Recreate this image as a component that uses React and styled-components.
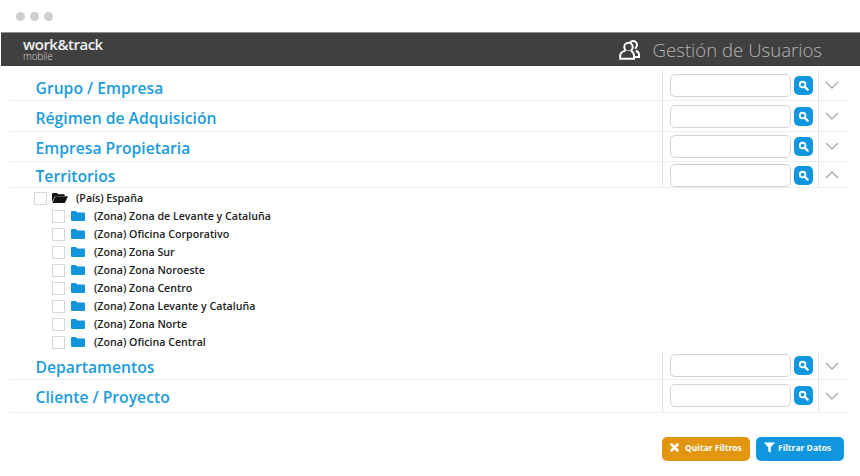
import React from 'react';
import styled, {createGlobalStyle} from 'styled-components';

const zones = [
  '(Zona) Zona de Levante y Cataluña',
  '(Zona) Oficina Corporativo',
  '(Zona) Zona Sur',
  '(Zona) Zona Noroeste',
  '(Zona) Zona Centro',
  '(Zona) Zona Levante y Cataluña',
  '(Zona) Zona Norte',
  '(Zona) Oficina Central',
];

const GlobalStyle = createGlobalStyle`
  html, body {
    margin: 0;
    padding: 0;
    background: #fff;
    font-family: "Open Sans", "Liberation Sans", sans-serif;
  }
  * { box-sizing: border-box; }
`;

const Page = styled.div`
  width: 860px;
  height: 476px;
  overflow: hidden;
  display: flex;
  flex-direction: column;
  background: #fff;
`;

const WindowBar = styled.div`
  height: 32px;
  display: flex;
  align-items: center;
  gap: 5px;
  padding: 0 0 0 16px;
`;

const Dot = styled.span`
  width: 9px;
  height: 9px;
  border-radius: 50%;
  background: #cfcfcf;
`;

const Header = styled.header`
  height: 34px;
  margin-left: 1px;
  background: #414040;
  border-top: 1px solid #8e8e8e;
  display: flex;
  align-items: center;
  justify-content: space-between;
  padding: 0 38px 0 22px;
  color: #fff;
`;

const Logo = styled.div`
  display: flex;
  flex-direction: column;
  color: #f2f2f2;
  padding-bottom: 1px;
`;

const LogoName = styled.span`
  font-size: 15px;
  line-height: 14px;
  letter-spacing: -0.5px;
  font-weight: 600;
`;

const LogoSub = styled.span`
  font-size: 10px;
  line-height: 10px;
  font-weight: 300;
  color: #d0d0d0;
  letter-spacing: -0.2px;
`;

const HeaderTitle = styled.div`
  display: flex;
  align-items: center;
  gap: 13px;
  font-size: 18.6px;
  font-weight: 300;
  color: #b5b5b5;
`;

const Content = styled.main`
  padding: 4px 12px 0 10px;
`;

const Row = styled.section`
  height: ${(p) => p.$height}px;
  display: flex;
  align-items: center;
  border-bottom: 1px solid #e6f2f8;
`;

const RowTitle = styled.h2`
  flex: 1;
  margin: ${(p) => p.$drop}px 0 0 25.5px;
  font-size: 15.7px;
  font-weight: 600;
  color: #1b9cdc;
`;

const Controls = styled.div`
  height: 100%;
  width: 186px;
  display: flex;
  align-items: center;
  border-left: 1px solid #e4e4e4;
  padding-left: 7px;
`;

const SearchGroup = styled.div`
  display: flex;
  align-items: center;
  margin-top: ${(p) => (p.$shift > 0 ? p.$shift * 2 : 0)}px;
  margin-bottom: ${(p) => (p.$shift < 0 ? p.$shift * -2 : 0)}px;
`;

const SearchInput = styled.input`
  width: 121px;
  height: 23px;
  border: 1px solid #d2d2d2;
  border-radius: 5px;
  background: #fff;
  outline: none;
`;

const SearchButton = styled.button`
  width: 19px;
  height: 19px;
  margin-left: 3px;
  padding: 0;
  border: 0;
  border-radius: 5px;
  background: #0f96de;
  display: flex;
  align-items: center;
  justify-content: center;
`;

const ChevronCell = styled.div`
  height: 100%;
  margin-left: 5px;
  padding-left: 6px;
  border-left: 1px solid #e4e4e4;
  display: flex;
  align-items: center;
`;

const Tree = styled.ul`
  list-style: none;
  margin: 0;
  padding: 1px 0 2px 24px;
`;

const TreeRow = styled.li`
  height: 18px;
  display: flex;
  align-items: center;
  padding-left: ${(p) => (p.$child ? 18 : 0)}px;
  font-size: 10.65px;
  font-weight: 600;
  color: #222;
`;

const Check = styled.span`
  width: 13px;
  height: 13px;
  border: 1px solid #d8d8d8;
  background: #fff;
  margin-right: 5px;
`;

const FolderWrap = styled.span`
  width: 16px;
  height: 12px;
  margin-right: 8px;
  display: flex;
  align-items: center;
  justify-content: center;
`;

const Footer = styled.footer`
  display: flex;
  justify-content: flex-end;
  gap: 6px;
  padding: 24px 16px 0 0;
`;

const ActionButton = styled.button`
  height: 24px;
  width: ${(p) => p.$width}px;
  border: 0;
  border-radius: 5px;
  background: ${(p) => p.$color};
  color: #fff;
  font-family: inherit;
  font-size: 8.5px;
  font-weight: 700;
  display: flex;
  align-items: center;
  gap: ${(p) => p.$gap}px;
  padding: 0 0 3px 8px;
`;

const SearchIcon = () => (
  <svg width="11" height="11" viewBox="0 0 12 12">
    <circle cx="5" cy="5" r="3.1" fill="none" stroke="#fff" strokeWidth="2" />
    <path d="M7.4 7.4L10.5 10.5" stroke="#fff" strokeWidth="2.4" strokeLinecap="round" />
  </svg>
);

const Chevron = ({open}) => (
  <svg width="14" height="9" viewBox="0 0 14 9">
    <path
      d={open ? 'M1 8L7 2L13 8' : 'M1 1L7 7L13 1'}
      fill="none"
      stroke="#aaa"
      strokeWidth="1.4"
    />
  </svg>
);

const Folder = ({open}) => (
  <FolderWrap>
    {open ? (
      <svg width="16" height="10" viewBox="0 0 16 10">
        <path d="M0 1Q0 0 1 0H5L6.3 1.2H12.6V3H3.2L0 9Z" fill="#111" />
        <path d="M3.4 3.2H16L12.8 10H.4Z" fill="#111" />
      </svg>
    ) : (
      <svg width="14" height="10" viewBox="0 0 14 10">
        <path d="M0 1Q0 0 1 0H5L6.3 1.4H13Q14 1.4 14 2.4V9Q14 10 13 10H1Q0 10 0 9Z" fill="#1294dc" />
      </svg>
    )}
  </FolderWrap>
);

const UsersIcon = () => (
  <svg width="21" height="20" viewBox="0 0 21 20" fill="none" stroke="#fff" strokeWidth="2">
    <path d="M10.5 3.2C11.3 1.9 12.6 1.1 14 1.1C16.3 1.1 18 2.9 18 5.1C18 6.6 17.3 7.8 16.1 8.6" />
    <circle cx="9.5" cy="7" r="4.2" fill="#414040" />
    <path d="M6.5 10.6C3.4 11.4 1.2 13.2 1.2 15.6V18.8H15V15.6C15 13.4 13.8 11.8 12 10.8" fill="#414040" />
    <path d="M15 17H20V14.6C20 12.8 18.8 11.6 16.8 10.8" />
  </svg>
);

const XIcon = () => (
  <svg width="9" height="9" viewBox="0 0 9 9">
    <path d="M1.5 1.5L7.5 7.5M7.5 1.5L1.5 7.5" stroke="#fff" strokeWidth="2.6" strokeLinecap="round" />
  </svg>
);

const FunnelIcon = () => (
  <svg width="11" height="11" viewBox="0 0 11 11">
    <path d="M0 .5H11L6.8 5.2V10.8L4.2 9.2V5.2Z" fill="#fff" />
  </svg>
);

const FilterRow = ({title, height, open, drop = 2, shift = 0}) => (
  <Row $height={height}>
    <RowTitle $drop={drop}>{title}</RowTitle>
    <Controls>
      <SearchGroup $shift={shift}>
        <SearchInput />
        <SearchButton>
          <SearchIcon />
        </SearchButton>
      </SearchGroup>
      <ChevronCell>
        <Chevron open={open} />
      </ChevronCell>
    </Controls>
  </Row>
);

const App = () => {
  return (
    <Page>
      <GlobalStyle />
      <WindowBar>
        <Dot />
        <Dot />
        <Dot />
      </WindowBar>
      <Header>
        <Logo>
          <LogoName>work&amp;track</LogoName>
          <LogoSub>mobile</LogoSub>
        </Logo>
        <HeaderTitle>
          <UsersIcon />
          Gestión de Usuarios
        </HeaderTitle>
      </Header>
      <Content>
        <FilterRow title="Grupo / Empresa" height={31} drop={5} />
        <FilterRow title="Régimen de Adquisición" height={31} drop={3} />
        <FilterRow title="Empresa Propietaria" height={30} shift={-0.5} />
        <FilterRow title="Territorios" height={26} shift={0.5} open />
        <Tree>
          <TreeRow>
            <Check />
            <Folder open />
            (País) España
          </TreeRow>
          {zones.map((zone) => (
            <TreeRow $child key={zone}>
              <Check />
              <Folder />
              {zone}
            </TreeRow>
          ))}
        </Tree>
        <FilterRow title="Departamentos" height={27} shift={-0.5} />
        <FilterRow title="Cliente / Proyecto" height={33} shift={-0.5} />
      </Content>
      <Footer>
        <ActionButton $width={88} $gap={6} $color="#e2950f">
          <XIcon />
          Quitar Filtros
        </ActionButton>
        <ActionButton $width={88} $gap={3} $color="#0f96de">
          <FunnelIcon />
          Filtrar Datos
        </ActionButton>
      </Footer>
    </Page>
  );
};

export default App;
